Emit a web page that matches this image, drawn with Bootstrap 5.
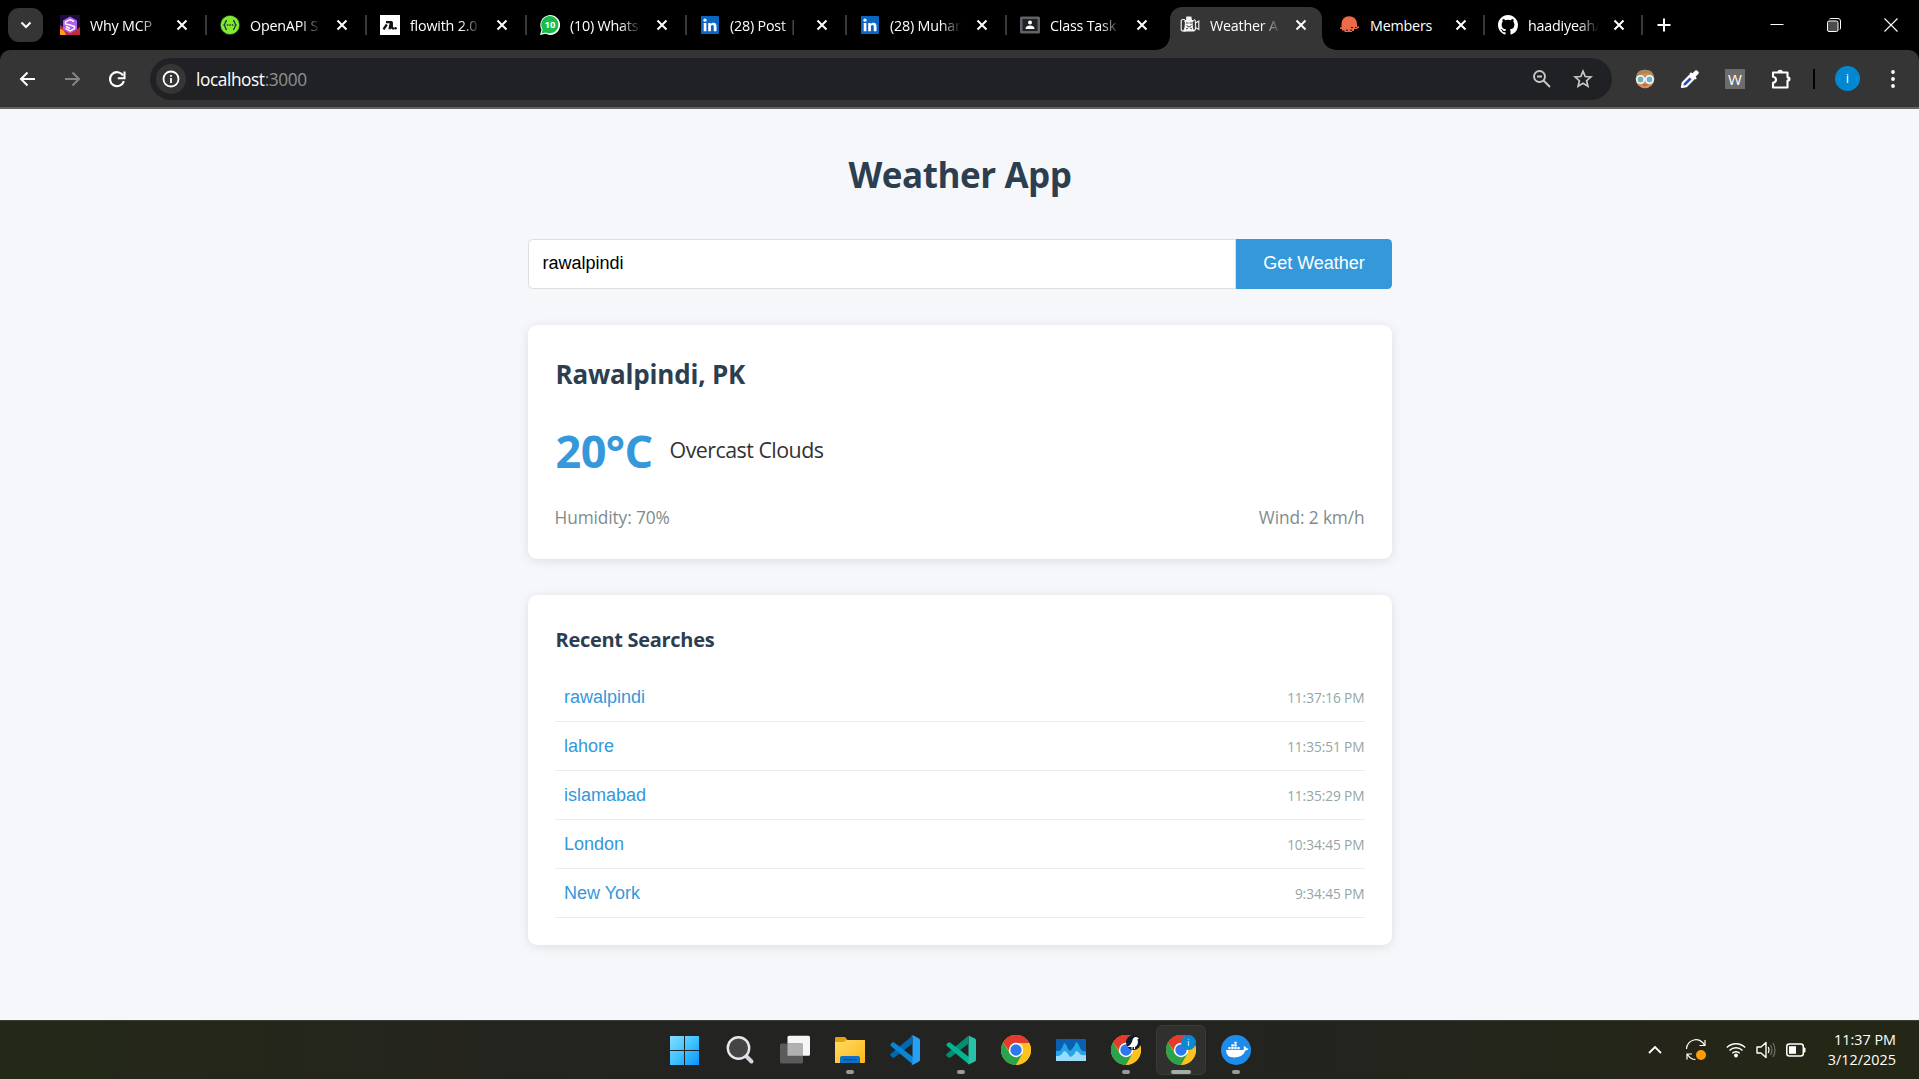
<!DOCTYPE html>
<html lang="en">
<head>
<meta charset="utf-8">
<title>Weather App</title>
<link href="https://cdn.jsdelivr.net/npm/bootstrap@5.3.0/dist/css/bootstrap.min.css" rel="stylesheet">
<style>
  html, body { height: 100%; }
  body { font-family: "Open Sans", "Noto Sans", sans-serif; background: #f5f7fb; color: #333; overflow: hidden; }
  svg { display: block; flex: none; }
  /* browser chrome */
  .tabstrip { height: 50px; background: #000; color: #fff; padding-left: 8px; }
  .tab-search { width: 35px; height: 34px; border-radius: 11px; background: #353535; margin-right: 3px; }
  .browser-tab { width: 160px; height: 42px; margin-top: 4px; padding-left: 14px; position: relative; }
  .browser-tab svg.fav { width: 20px; height: 20px; }
  .browser-tab .ttl { width: 72px; margin-left: 10px; padding-top: 1px; overflow: hidden; white-space: nowrap; font-size: 14.3px; line-height: 20px; letter-spacing: -.2px; -webkit-mask-image: linear-gradient(90deg, #000 70%, transparent 99%); }
  .browser-tab .ttl.whole { -webkit-mask-image: none; }
  .browser-tab .cls { margin-left: 14px; }
  .browser-tab.sep::after { content: ""; position: absolute; right: -1px; top: 11px; width: 2px; height: 20px; background: #383838; }
  .tab-on { background: #353535; height: 43px; margin-top: 7px; border-radius: 12px 12px 0 0; width: 152px; margin-left: 4px; margin-right: 4px; padding-left: 10px; padding-bottom: 7px; }
  .tab-on .cls, .tab-short .cls { margin-left: 13px; }
  .tab-on::before, .tab-on::after { content: ""; position: absolute; bottom: 0; width: 14px; height: 14px; }
  .tab-on::before { left: -14px; background: radial-gradient(circle at 0 0, #000 13.5px, #353535 14px); }
  .tab-on::after { right: -14px; background: radial-gradient(circle at 100% 0, #000 13.5px, #353535 14px); }
  .tab-short { width: 158px; }
  .toolbar-outer { background: #000; height: 59px; }
  .toolbar { background: #353535; height: 59px; border-bottom: 2px solid #656361; border-radius: 10px 10px 0 0; padding-left: 17px; }
  .omnibox { width: 1462px; height: 42px; border-radius: 21px; background: #202124; padding-left: 6px; margin-left: 23px; }
  .site-info { width: 30px; height: 30px; border-radius: 50%; background: #353535; }
  .url { font-size: 17.3px; line-height: 24px; color: #fff; margin-left: 10px; padding-top: 2px; letter-spacing: -.42px; }
  .url span { color: #8f9195; }
  .avatar { width: 25px; height: 25px; border-radius: 50%; background: #0288d1; color: #fff; font-size: 13px; line-height: 25px; }
  .vline { width: 2px; height: 20px; background: #000; }
  .ext-w { width: 20px; height: 20px; background: #6c6c6c; color: #fff; font-size: 15px; line-height: 20px; }
  /* page */
  .page-area { height: 911px; background: #f5f7fb; padding-top: 40px; }
  .app-col { width: 864px; }
  .app-title { font-weight: 700; color: #2c3e50; font-size: 35px; line-height: 52px; letter-spacing: -.45px; margin-bottom: 38px; padding-left: 1px; }
  .arial { font-family: "Liberation Sans", Arial, sans-serif; font-size: 18px; }
  .search-in { height: 50px; border: 1px solid #ddd; border-radius: 4.5px 0 0 4.5px; padding: 0 14px 2px; color: #000; box-shadow: none; }
  .search-btn { width: 156px; background: #3498db; color: #fff; border: 0; border-radius: 0 4.5px 4.5px 0; padding: 0 0 2px 1px; }
  .panel { background: #fff; border-radius: 9px; box-shadow: 0 2px 11px rgba(0,0,0,.1); padding: 27px; }
  .weather-panel { height: 234px; margin-top: 36px; }
  .recent-panel { height: 350px; margin-top: 36px; }
  .city { font-weight: 700; font-size: 26px; line-height: 36px; color: #2c3e50; margin: 4px 0 0 1px; letter-spacing: -.2px; }
  .temp-row { margin: 29px 0 0 1px; }
  .temp { font-weight: 700; font-size: 45px; line-height: 60px; color: #3498db; letter-spacing: -.6px; }
  .cond { font-size: 21.4px; line-height: 30px; margin-left: 17px; padding-bottom: 2px; letter-spacing: -.52px; }
  .facts { font-size: 17.3px; line-height: 24px; color: #7f8c8d; letter-spacing: -.1px; margin-top: 25px; }
  .recent-title { font-weight: 700; font-size: 20px; line-height: 28px; color: #2c3e50; letter-spacing: -.3px; margin: 4px 0 19px 1px; }
  .recent-row { height: 49px; border-bottom: 1px solid #eaeced; padding: 0 0 0 9.5px; }
  .recent-row a { color: #3498db; text-decoration: none; }
  .recent-row time { font-size: 13.7px; color: #95a5a6; letter-spacing: -.08px; padding-top: 2px; }
  /* taskbar */
  .taskbar { height: 59px; padding-right: 3px; border-top: 1px solid #3c3d36; background: linear-gradient(90deg, #232918 0, #25261b 15%, #232321 35%, #232321 60%, #24251a 80%, #242715 100%); position: relative; }
  .task { width: 50px; height: 50px; border-radius: 6px; position: relative; margin: 4px 0 0 5.1px; }
  .task.run::after { content: ""; position: absolute; left: 21px; bottom: 1px; width: 8px; height: 4px; border-radius: 2px; background: #9a9a98; }
  .task.cur { background: #30302f; border: 1px solid #3a3a39; }
  .task.cur::after { left: 14px; bottom: 0; width: 20px; background: #a3b1a5; }
  .tray { position: absolute; right: 23px; top: 0; height: 58px; color: #fff; }
  .clock { font-size: 14.4px; line-height: 20px; letter-spacing: 0; width: 80px; }
</style>
<script src="https://cdn.jsdelivr.net/npm/bootstrap@5.3.0/dist/js/bootstrap.bundle.min.js"></script>
</head>
<body>
<svg width="0" height="0" class="position-absolute">
  <defs>
    <symbol id="x" viewBox="0 0 12 12"><path d="M1.5 1.5l9 9M10.500 1.500l-9 9" stroke="#fff" stroke-width="2" fill="none"/></symbol>
    <symbol id="in" viewBox="0 0 20 20"><rect x="1" y="1" width="18" height="18" rx="1" fill="#0a66c2"/><path d="M3.700 8h2.700v8.300H3.700zM8.200 8h2.500v1.200c.5-.8 1.400-1.400 2.700-1.400 2.500 0 3.100 1.600 3.100 3.900v4.600h-2.700v-4.100c0-1.200-.2-2.100-1.400-2.100s-1.500.9-1.500 2v4.200H8.200z" fill="#fff"/><circle cx="5" cy="5.200" r="1.600" fill="#fff"/></symbol>
    <symbol id="chrome" viewBox="0 0 30 30"><circle cx="15" cy="15" r="15" fill="#fbbc16"/><path d="M15 15L2 7.500A15 15 0 0 1 28 7.500z" fill="#e33b2e"/><path d="M15 8h13.300A15 15 0 0 0 2 7.500L9 17z" fill="#e33b2e"/><path d="M2 7.500A15 15 0 0 0 15 30l6.300-11L15 15 9 18.500z" fill="#2ba24c"/><path d="M15 30a15 15 0 0 0 13.300-22H15l6.500 11z" fill="#fcc31e"/><circle cx="15" cy="15" r="7.200" fill="#fff"/><circle cx="15" cy="15" r="5.700" fill="#2e78ee"/></symbol>
  </defs>
</svg>

<header>
  <nav class="tabstrip d-flex align-items-start">
    <div class="tab-search d-flex align-items-center justify-content-center mt-2"><svg width="12" height="8" viewBox="0 0 12 8"><path d="M1.500 1.500L6 6l4.500-4.500" fill="none" stroke="#fff" stroke-width="2"/></svg></div>
    <div class="browser-tab sep d-flex align-items-center">
      <svg class="fav" viewBox="0 0 20 20"><rect width="20" height="20" fill="#1b0c3c"/><path d="M0 10q5 4 9 6t11-4v8H0z" fill="#c4293b"/><path d="M0 14q4 0 6 6H0z" fill="#ff9b20"/><path d="M10 1.500l7 4v9l-7 4-7-4v-9z" fill="#b060e8"/><path d="M14 6.500l-4-2-4.500 2.500v2l4.500 1 4.500 1.500v2L10 16l-4.500-2.500M6 11.500l4 2" fill="none" stroke="#fff" stroke-width="1.400"/></svg>
      <span class="ttl">Why MCP</span><svg class="cls" width="12" height="12"><use href="#x"/></svg></div>
    <div class="browser-tab sep d-flex align-items-center">
      <svg class="fav" viewBox="0 0 20 20"><circle cx="10" cy="10" r="9.600" fill="#85ea2d" stroke="#173647" stroke-width=".6"/><path d="M7 5.500c-2.500 0-1 3.500-3 4.500 2 1 .5 4.500 3 4.500M13 5.500c2.500 0 1 3.500 3 4.500-2 1-.5 4.500-3 4.500" fill="none" stroke="#173647" stroke-width="1.300"/><path d="M6.800 10h1.500m1 0h1.500m1 0h1.500" stroke="#173647" stroke-width="1.500"/></svg>
      <span class="ttl">OpenAPI S</span><svg class="cls" width="12" height="12"><use href="#x"/></svg></div>
    <div class="browser-tab sep d-flex align-items-center">
      <svg class="fav" viewBox="0 0 20 20"><rect width="20" height="20" fill="#fff"/><path d="M3.500 14.300L6.800 9.500M6 7.200h5L9.500 14.300M11.800 7v4.500q0 2.200 2.200 1.800" fill="none" stroke="#111" stroke-width="2.300"/><circle cx="15.500" cy="13.300" r="1.300" fill="#111"/></svg>
      <span class="ttl">flowith 2.0</span><svg class="cls" width="12" height="12"><use href="#x"/></svg></div>
    <div class="browser-tab sep d-flex align-items-center">
      <svg class="fav" viewBox="0 0 20 20"><path d="M0 20l1.500-5.300A9.900 9.900 0 1 1 5.500 18.700z" fill="#fff"/><path d="M1.600 18.400l1-4A8.600 8.600 0 1 1 6 17.400z" fill="#17bd4c"/><text x="10" y="13.300" font-size="9.500" font-weight="700" fill="#fff" text-anchor="middle">10</text></svg>
      <span class="ttl">(10) Whats</span><svg class="cls" width="12" height="12"><use href="#x"/></svg></div>
    <div class="browser-tab sep d-flex align-items-center">
      <svg class="fav"><use href="#in"/></svg>
      <span class="ttl">(28) Post |</span><svg class="cls" width="12" height="12"><use href="#x"/></svg></div>
    <div class="browser-tab sep d-flex align-items-center">
      <svg class="fav"><use href="#in"/></svg>
      <span class="ttl">(28) Muhar</span><svg class="cls" width="12" height="12"><use href="#x"/></svg></div>
    <div class="browser-tab d-flex align-items-center">
      <svg class="fav" viewBox="0 0 20 20"><rect y="1.500" width="20" height="17" rx="1.500" fill="#5f6368"/><rect x="2.500" y="4" width="15" height="12" fill="#202124"/><circle cx="10" cy="7.500" r="2" fill="#fff"/><path d="M5.500 14q0-3.500 4.500-3.500t4.500 3.500z" fill="#fff"/></svg>
      <span class="ttl">Class Task</span><svg class="cls" width="12" height="12"><use href="#x"/></svg></div>
    <div class="browser-tab tab-on d-flex align-items-center">
      <svg class="fav" viewBox="0 0 20 20"><path d="M5 4.500H3Q1.200 4.500 1.200 6.500v7.500q0 2 2 2h3M15.500 8L18.800 6v8.500L15.500 12.500M14 4.500q1.500.5 1.500 2v7q0 2-2 2" fill="none" stroke="#e8e8e8" stroke-width="1.200"/><path d="M4 6l1-1h1l.3-3.500h5L12 5h1.500l.5 1-1.500 1 .5 6 1.500 3.500H3l1.500-4 .5-5z" fill="#f4f4f4"/><path d="M6 8h2.500m1 0H12M6.500 10.500q2.500 3 5 0M6 14l2-1m2 0l2 1" stroke="#444" stroke-width="1" fill="none"/></svg>
      <span class="ttl">Weather A</span><svg class="cls" width="12" height="12"><use href="#x"/></svg></div>
    <div class="browser-tab tab-short sep d-flex align-items-center">
      <svg class="fav" viewBox="0 0 20 20"><path d="M0 12.500h1.500V9q.5-7.500 7.500-7.700Q16.500 1.500 17 9v2.500h2v1.500h-1.500v1H14v2h-2v1H4.500V15.500H2V14H0z" fill="#ec6a48"/><path d="M11 12.500h2m2 0h1.500M6 15.200h2m2 0h2" stroke="#000" stroke-width=".9"/></svg>
      <span class="ttl whole">Members</span><svg class="cls" width="12" height="12"><use href="#x"/></svg></div>
    <div class="browser-tab tab-short sep d-flex align-items-center">
      <svg class="fav" viewBox="0 0 16 16"><path fill="#fff" d="M8 0C3.580 0 0 3.580 0 8c0 3.540 2.290 6.530 5.470 7.590.4.070.55-.17.55-.38 0-.19-.01-.82-.01-1.490-2.010.37-2.530-.49-2.690-.94-.09-.23-.48-.94-.82-1.130-.28-.15-.68-.52-.01-.53.63-.01 1.080.58 1.230.82.72 1.210 1.870.87 2.330.66.07-.52.28-.87.51-1.070-1.780-.2-3.640-.89-3.640-3.950 0-.87.31-1.590.82-2.150-.08-.2-.36-1.020.08-2.120 0 0 .67-.21 2.200.82a7.600 7.600 0 0 1 4 0c1.530-1.040 2.200-.82 2.200-.82.44 1.100.16 1.920.08 2.120.51.56.82 1.270.82 2.150 0 3.070-1.870 3.750-3.650 3.950.29.25.54.73.54 1.480 0 1.070-.01 1.930-.01 2.200 0 .21.15.46.55.38A8 8 0 0 0 16 8c0-4.420-3.580-8-8-8z"/></svg>
      <span class="ttl">haadiyeah/</span><svg class="cls" width="12" height="12"><use href="#x"/></svg></div>
    <svg class="align-self-center" style="margin-left:12px" width="20" height="14" viewBox="0 0 20 14"><path d="M10 .5v13M3.500 7h13" stroke="#fff" stroke-width="2"/></svg>
    <div class="d-flex ms-auto align-self-center align-items-center" style="padding-right:21px;padding-bottom:1px">
      <svg width="14" height="14" viewBox="0 0 14 14"><path d="M.5 6.500h13" stroke="#fff"/></svg>
      <svg style="margin-left:43px" width="14" height="14" viewBox="0 0 14 14"><rect x=".5" y="3" width="10.500" height="10.500" rx="1.500" fill="#4b4b4b" stroke="#fff"/><path d="M2.500 1Q3 .5 4 .5h7Q13.500.5 13.500 3v7q0 1-.5 1.500" fill="none" stroke="#fff"/></svg>
      <svg style="margin-left:43px" width="14" height="14" viewBox="0 0 14 14"><path d="M.5.5l13 13M13.500.5l-13 13" stroke="#fff" stroke-width="1.100"/></svg>
    </div>
  </nav>
  <div class="toolbar-outer">
    <div class="toolbar d-flex align-items-center">
      <svg width="20" height="20" viewBox="0 0 20 20"><path d="M18 10H4.500M10.500 3.500L4 10l6.500 6.500" fill="none" stroke="#fff" stroke-width="2"/></svg>
      <svg style="margin-left:25px" width="20" height="20" viewBox="0 0 20 20"><path d="M3 10h13.500M10.500 3.500L17 10l-6.500 6.500" fill="none" stroke="#858585" stroke-width="2"/></svg>
      <svg style="margin-left:25px" width="20" height="20" viewBox="0 0 20 20"><path d="M16 6.500A7 7 0 1 0 16.800 12" fill="none" stroke="#fff" stroke-width="2.100"/><path d="M17.500 2.500v6.700h-6.700" fill="none" stroke="#fff" stroke-width="2.100"/></svg>
      <div class="omnibox d-flex align-items-center">
        <div class="site-info d-flex align-items-center justify-content-center"><svg width="18" height="18" viewBox="0 0 18 18"><circle cx="9" cy="9" r="7.500" fill="none" stroke="#fff" stroke-width="1.800"/><path d="M9 8v5M9 5v1.800" stroke="#fff" stroke-width="1.800"/></svg></div>
        <div class="url">localhost<span>:3000</span></div>
        <svg class="ms-auto" width="20" height="20" viewBox="0 0 20 20"><circle cx="7.500" cy="7.500" r="5.500" fill="none" stroke="#c7c7c7" stroke-width="1.900"/><path d="M11.500 11.500l6.500 6.500M5 7.500h5" stroke="#c7c7c7" stroke-width="1.900"/></svg>
        <svg style="margin:0 19px 0 21px" width="20" height="20" viewBox="0 0 20 20"><path d="M10 2.200l2.200 5.300 5.700.5-4.300 3.700 1.300 5.600-4.900-3-4.900 3 1.300-5.600L2.100 8l5.700-.5z" fill="none" stroke="#c7c7c7" stroke-width="1.700"/></svg>
      </div>
      <svg style="margin-left:23px" width="20" height="20" viewBox="0 0 20 20"><circle cx="10" cy="10" r="9.300" fill="#d98d63"/><path d="M1 9Q1 .7 10 .7T19 9q-2-4-6-4.500Q5 4 1 9z" fill="#a58a5c"/><circle cx="5.500" cy="10.500" r="3.700" fill="#6fb3c0" stroke="#f4fbff" stroke-width="1.600"/><circle cx="14.500" cy="10.500" r="3.700" fill="#6fb3c0" stroke="#f4fbff" stroke-width="1.600"/><path d="M7.500 16h5" stroke="#b5523c" stroke-width="1.200"/></svg>
      <svg style="margin-left:25px" width="20" height="20" viewBox="0 0 20 20"><path d="M2 18l.8-4.200 8.700-8.700 3.400 3.400-8.700 8.700z" fill="#2b49c0" stroke="#fff" stroke-width="2.200" stroke-linejoin="round"/><path d="M9.500 4.500l6 6 1.300-1.300-1.300-1.500 3-3q1-1-.5-2.500t-2.700-.7l-3 3-1.200-1.300z" fill="#fff"/><path d="M11.500 5.500l3.200 3.200-2.400 2.400-3.300-3.300z" fill="#fff"/></svg>
      <div class="ext-w text-center" style="margin-left:25px">W</div>
      <svg style="margin-left:25px" width="22" height="22" viewBox="0 0 22 22"><path d="M3 4.500h14.500v4.800q2 0 2 1.700t-2 1.700v6.800H3v-4.700q3-.3 3-3t-3-3z" fill="none" stroke="#fff" stroke-width="2.100" stroke-linejoin="round"/><path d="M7.500 4.500a2.700 2.700 0 0 1 5.400 0zM17.500 8.500a2.500 2.500 0 0 1 0 5z" fill="#fff"/></svg>
      <div class="vline" style="margin-left:21px"></div>
      <div class="avatar text-center" style="margin-left:20px">i</div>
      <svg style="margin-left:31px" width="4" height="20" viewBox="0 0 4 20"><circle cx="2" cy="3" r="1.900" fill="#fff"/><circle cx="2" cy="10" r="1.900" fill="#fff"/><circle cx="2" cy="17" r="1.900" fill="#fff"/></svg>
    </div>
  </div>
</header>

<main class="page-area">
  <div class="app-col mx-auto">
    <h1 class="app-title text-center">Weather App</h1>
    <form class="d-flex">
      <input class="search-in form-control arial" value="rawalpindi" aria-label="City">
      <button class="search-btn btn arial flex-shrink-0" type="button">Get Weather</button>
    </form>
    <section class="panel weather-panel">
      <h2 class="city">Rawalpindi, PK</h2>
      <div class="temp-row d-flex align-items-center">
        <span class="temp">20°C</span><span class="cond">Overcast Clouds</span>
      </div>
      <div class="facts d-flex justify-content-between"><span>Humidity: 70%</span><span>Wind: 2 km/h</span></div>
    </section>
    <section class="panel recent-panel">
      <h3 class="recent-title">Recent Searches</h3>
      <div class="recent-row d-flex align-items-center justify-content-between"><a href="#" class="arial">rawalpindi</a><time>11:37:16 PM</time></div>
      <div class="recent-row d-flex align-items-center justify-content-between"><a href="#" class="arial">lahore</a><time>11:35:51 PM</time></div>
      <div class="recent-row d-flex align-items-center justify-content-between"><a href="#" class="arial">islamabad</a><time>11:35:29 PM</time></div>
      <div class="recent-row d-flex align-items-center justify-content-between"><a href="#" class="arial">London</a><time>10:34:45 PM</time></div>
      <div class="recent-row d-flex align-items-center justify-content-between"><a href="#" class="arial">New York</a><time>9:34:45 PM</time></div>
    </section>
  </div>
</main>

<footer class="taskbar d-flex justify-content-center align-items-start">
  <div class="task d-flex align-items-center justify-content-center"><svg width="30" height="30" viewBox="0 0 30 30"><defs><linearGradient id="wg" x1="0" y1="0" x2="1" y2="1"><stop offset="0" stop-color="#86dcff"/><stop offset=".5" stop-color="#3fc4ff"/><stop offset="1" stop-color="#0a92ff"/></linearGradient></defs><path d="M0 1H14V15H0zM15 1H29V15H15zM0 16H14V30H0zM15 16H29V30H15z" fill="url(#wg)"/></svg></div>
  <div class="task d-flex align-items-center justify-content-center"><svg width="30" height="30" viewBox="0 0 30 30"><path d="M20 20l6.500 6.500" stroke="#d5d8dc" stroke-width="4" stroke-linecap="round"/><circle cx="13.500" cy="13" r="10.700" fill="#454545" stroke="#e6e8ea" stroke-width="2.400"/></svg></div>
  <div class="task d-flex align-items-center justify-content-center"><svg width="30" height="30" viewBox="0 0 30 30"><rect x="7.500" y=".8" width="22.500" height="20" rx="1.500" fill="#f6f6f6"/><rect x="0" y="8.500" width="23" height="20" rx="1.500" fill="#5b5b5b"/><path d="M7.500 8.500H23v12.300H7.500z" fill="#b1b1b1"/></svg></div>
  <div class="task run d-flex align-items-center justify-content-center"><svg width="30" height="30" viewBox="0 0 30 30"><defs><linearGradient id="fg" x1="0" y1="0" x2="1" y2="1"><stop offset="0" stop-color="#ffdb64"/><stop offset="1" stop-color="#fbb916"/></linearGradient></defs><path d="M0 7V3Q0 2 1.500 2H10l2.500 3-3 3z" fill="#e2a208"/><path d="M0 7h8.500l3-2H30v22q0 1-1 1H0z" fill="url(#fg)"/><path d="M5 28v-5q0-2 2-2h16q2 0 2 2v5z" fill="#0c6fc8"/><path d="M8.500 24.700h13" stroke="#094d91" stroke-width="1.200"/></svg></div>
  <div class="task d-flex align-items-center justify-content-center"><svg width="30" height="30" viewBox="0 0 30 30"><path d="M22 1v8L4.500 22.500Q3 23.200 1.800 22L.6 20.700q-.8-1 .2-2z" fill="#0067b0"/><path d="M.8 11Q0 10 .6 9.200L2 7.800q1.200-.9 2.500 0L23 22v7.500z" fill="#0a85d6"/><path d="M21 29.200q1 .8 2.500.2l5.500-2.800q1-.6 1-1.800V5.200q0-1.200-1-1.800L23.500.6q-1.500-.6-2.700.4 1.700-.4 1.700 1.500v25.200q0 1.800-1.500 1.500z" fill="#26a0f4"/></svg></div>
  <div class="task run d-flex align-items-center justify-content-center"><svg width="30" height="30" viewBox="0 0 30 30"><path d="M22 1v8L4.500 22.500Q3 23.200 1.800 22L.6 20.700q-.8-1 .2-2z" fill="#008f72"/><path d="M.8 11Q0 10 .6 9.200L2 7.800q1.200-.9 2.500 0L23 22v7.500z" fill="#05b392"/><path d="M22.500.5L29 3.400q1 .6 1 1.800v19.600q0 1.200-1 1.800l-6.500 3z" fill="#27c2a7"/></svg></div>
  <div class="task d-flex align-items-center justify-content-center"><svg width="30" height="30"><use href="#chrome"/></svg></div>
  <div class="task d-flex align-items-center justify-content-center"><svg width="30" height="22" viewBox="0 0 30 22"><rect width="30" height="22" rx="1" fill="#0a5fae"/><path d="M0 12h3q3-1 5-8 2 0 4 6l2 2q4-3 6-9 2 0 4 6 2 4 6 3v10H0z" fill="#27a3ea"/><path d="M0 17h3q3-1 5-5 2 0 4 3l2 3q4-1 6-6 2 0 4 3 2 2 6 1v6H0z" fill="#9bdcfb"/></svg></div>
  <div class="task run d-flex align-items-center justify-content-center"><svg width="30" height="30" viewBox="0 0 30 30"><use href="#chrome" width="30" height="30"/><circle cx="22.500" cy="7.500" r="7.500" fill="#0b1c30"/><path d="M16 12q4-2 5-5 .5-4 3-5 3-.3 4 1.500l-1.500.5q1.500 6-2.500 8v2h-1v-2h-1.500v2h-1v-2z" fill="#fff"/></svg></div>
  <div class="task run cur d-flex align-items-center justify-content-center"><svg width="30" height="30" viewBox="0 0 30 30"><use href="#chrome" width="30" height="30"/><circle cx="22.500" cy="7.500" r="7.500" fill="#0c88d0"/><text x="22.500" y="11" font-size="9" fill="#fff" text-anchor="middle">i</text></svg></div>
  <div class="task run d-flex align-items-center justify-content-center"><svg width="30" height="30" viewBox="0 0 30 30"><circle cx="15" cy="15" r="15" fill="#1d8ceb"/><path d="M5 15h17q.5 0 1-.7-.8-1.800.5-3.300 1.500.8 1.700 2.300 1.500-.2 2.300.4-.8 1.800-3 1.800Q21.500 22.500 13 22.500 5 22.500 5 15z" fill="#fff"/><path d="M7.300 12h2.400v2.300H7.300zM10.300 12h2.400v2.300h-2.400zM13.300 12h2.400v2.300h-2.400zM16.300 12h2.400v2.300h-2.400zM10.300 9.200h2.400v2.300h-2.400zM13.300 9.200h2.400v2.300h-2.400zM13.300 6.800h2.400v1.900h-2.400z" fill="#fff"/></svg></div>
  <div class="tray d-flex align-items-center">
    <svg width="16" height="10" viewBox="0 0 16 10"><path d="M2 8l6-6 6 6" fill="none" stroke="#fff" stroke-width="1.800"/></svg>
    <svg style="margin-left:22px" width="22" height="22" viewBox="0 0 22 22"><path d="M1.500 10A9.500 9.500 0 0 1 19.500 6M20 1v5.500h-5.500M2 20.500V15h5M2.500 15.500q3 5 8 5" fill="none" stroke="#fff" stroke-width="1.200"/><circle cx="16" cy="16" r="5" fill="#ff9c08"/></svg>
    <svg style="margin-left:19px" width="20" height="16" viewBox="0 0 20 16"><path d="M.8 5.500a13 13 0 0 1 18.400 0M3.500 8.500a9.200 9.200 0 0 1 13 0M6.300 11.300a5.300 5.300 0 0 1 7.400 0" fill="none" stroke="#fff" stroke-width="1.400"/><circle cx="10" cy="13.500" r="1.900" fill="#fff"/></svg>
    <svg style="margin-left:10px" width="20" height="18" viewBox="0 0 20 18"><path d="M1 6h4l5-4.500v15L5 12H1z" fill="none" stroke="#fff" stroke-width="1.400" stroke-linejoin="round"/><path d="M12.300 6q1.500 3 0 6" fill="none" stroke="#fff" stroke-width="1.300"/><path d="M14.500 4q3 5 0 10M17 2q4 7 0 14" fill="none" stroke="#6b6b60" stroke-width="1.300"/></svg>
    <svg style="margin-left:10px" width="20" height="14" viewBox="0 0 20 14"><rect x=".8" y="1" width="16.500" height="12" rx="2.500" fill="none" stroke="#fff" stroke-width="1.500"/><rect x="3" y="3.200" width="7" height="7.600" fill="#fff"/><path d="M17.500 5h1.500v4h-1.500z" fill="#fff" stroke="#fff"/></svg>
    <div class="clock text-end" style="margin-left:10px">11:37 PM<br>3/12/2025</div>
  </div>
</footer>
</body>
</html>
